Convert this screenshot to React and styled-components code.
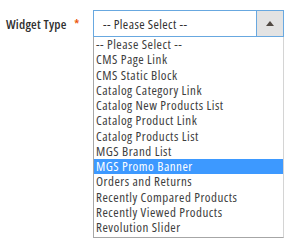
import React from "react";
import styled, { createGlobalStyle } from "styled-components";

const options = [
  "-- Please Select --",
  "CMS Page Link",
  "CMS Static Block",
  "Catalog Category Link",
  "Catalog New Products List",
  "Catalog Product Link",
  "Catalog Products List",
  "MGS Brand List",
  "MGS Promo Banner",
  "Orders and Returns",
  "Recently Compared Products",
  "Recently Viewed Products",
  "Revolution Slider",
];

const GlobalStyle = createGlobalStyle`
  body {
    margin: 0;
    background: #fff;
    font-family: "Open Sans", "Liberation Sans", sans-serif;
  }
`;

function App() {
  return (
    <>
      <GlobalStyle />
      <Field>
        <Label>
          Widget Type <Required>*</Required>
        </Label>
        <Control>
          <Select>
            <Value>-- Please Select --</Value>
            <ArrowButton>
              <svg width="8" height="5" viewBox="0 0 8 5">
                <path d="M0 5 L4 0 L8 5 Z" fill="#514943" />
              </svg>
            </ArrowButton>
          </Select>
          <List>
            {options.map((o) => (
              <Option key={o} $selected={o === "MGS Promo Banner"}>
                {o}
              </Option>
            ))}
          </List>
        </Control>
      </Field>
    </>
  );
}

const Field = styled.div`
  display: flex;
  align-items: flex-start;
  padding: 10px 0 0 6px;
`;

const Label = styled.label`
  width: 87px;
  flex: none;
  padding-top: 5px;
  font-size: 13px;
  font-stretch: 75%;
  letter-spacing: 0.2px;
  font-weight: 600;
  white-space: nowrap;
  color: #303030;
`;

const Required = styled.span`
  color: #eb5202;
  font-size: 12px;
  margin-left: 5px;
`;

const Control = styled.div`
  width: 191px;
  display: flex;
  flex-direction: column;
`;

const Select = styled.div`
  height: 27px;
  box-sizing: border-box;
  border: 1px solid #68a8e0;
  display: flex;
  align-items: stretch;
`;

const Value = styled.div`
  flex: 1;
  padding-left: 9px;
  display: flex;
  align-items: center;
  font-size: 13px;
  font-stretch: 75%;
  letter-spacing: 0.4px;
  color: #303030;
`;

const ArrowButton = styled.div`
  width: 26px;
  background: #e3e3e3;
  border-left: 1px solid #68a8e0;
  display: flex;
  align-items: center;
  justify-content: center;
`;

const List = styled.div`
  border: 1px solid #a6a6a6;
  border-top: none;
  border-right-color: #d4d4d4;
  padding: 0 0 2px;
`;

const Option = styled.div`
  padding-left: 2px;
  height: 15.25px;
  line-height: 15.25px;
  font-size: 13px;
  font-stretch: 75%;
  letter-spacing: 0.5px;
  white-space: nowrap;
  color: ${(p) => (p.$selected ? "#fff" : "#3d3d3d")};
  background: ${(p) => (p.$selected ? "#3d99ff" : "transparent")};
`;

export default App;
